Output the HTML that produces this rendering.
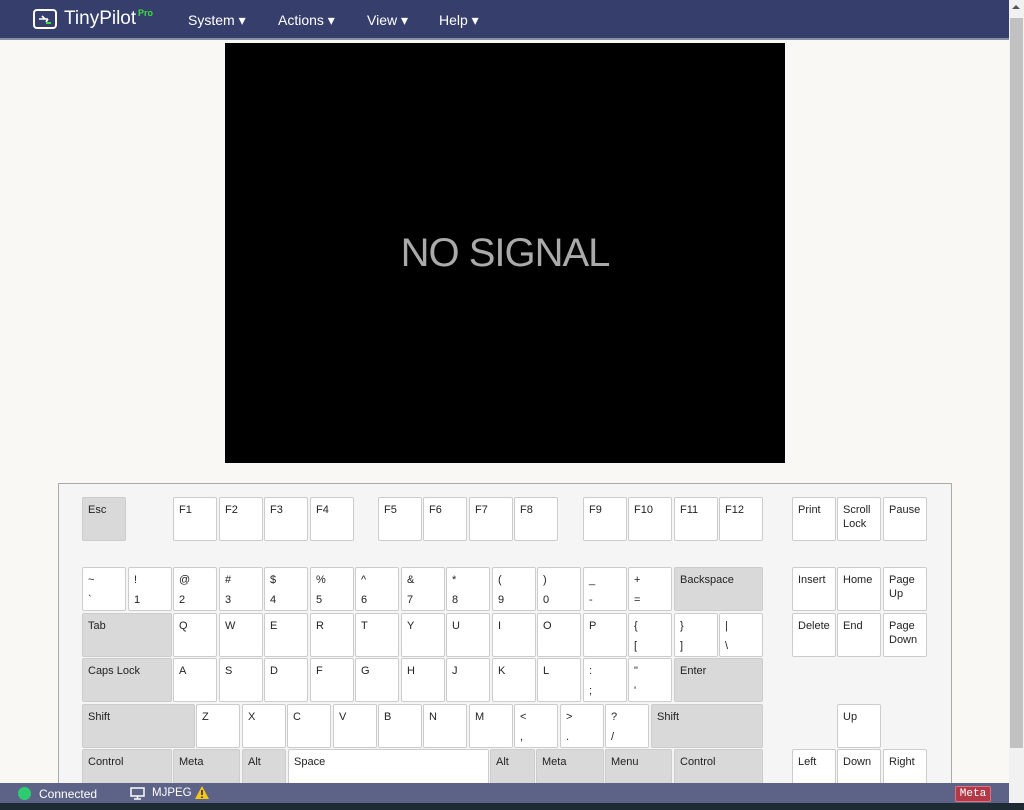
<!DOCTYPE html>
<html><head><meta charset="utf-8"><style>
*{box-sizing:border-box;margin:0;padding:0}
body{width:1024px;height:810px;overflow:hidden;background:#faf8f4;font-family:"Liberation Sans",Arial,sans-serif;position:relative}
.nav{position:absolute;left:0;top:0;width:1009px;height:40px;background:#363f6c;border-bottom:2px solid #8a8fa8}
.nav .logo{position:absolute;left:33px;top:9px;width:24px;height:20px;border:2px solid #fff;border-radius:4px}
.brand{position:absolute;left:64px;top:8px;color:#fff;font-size:19px}
.pro{position:absolute;left:138px;top:8px;color:#3ddc3d;font-size:9px;font-weight:bold}
.menu{position:absolute;top:12px;color:#fff;font-size:14px}
.sb{position:absolute;left:1009px;top:0;width:15px;height:803px;background:#f1f1f1}
.thumb{position:absolute;left:1010px;top:18px;width:13px;height:730px;background:#c1c1c1}
.video{position:absolute;left:225px;top:43px;width:560px;height:420px;background:#000;color:#aaa;font-size:40px;text-align:center;line-height:420px;letter-spacing:-1px}
.kb{position:absolute;left:58px;top:483px;width:894px;height:320px;background:#f5f5f5;border:1px solid #aaa}
.k{position:absolute;height:44px;background:#fff;border:1px solid #ccc;border-radius:2px;font-size:11px;color:#222;padding:5px 0 0 5px;line-height:14px}
.k.g{background:#d9d9d9}
.k i{font-style:normal;display:block;margin-top:6px}
.foot{position:absolute;left:0;top:783px;width:1009px;height:20px;background:#5d6387;color:#fff;font-size:12px}
.task{position:absolute;left:0;top:803px;width:1024px;height:7px;background:#1f2b33}
</style></head><body>
<div class="nav">
 <div class="logo"><svg width="20" height="16" viewBox="0 0 20 16" style="position:absolute;left:0;top:0"><path d="M4 8h9M7 5l3 3M13 8l-2 3" stroke="#fff" stroke-width="1.6" fill="none"/><path d="M11 12h5" stroke="#3ddc3d" stroke-width="2"/></svg></div>
 <div class="brand">TinyPilot</div><div class="pro">Pro</div>
 <div class="menu" style="left:188px">System ▾</div>
 <div class="menu" style="left:278px">Actions ▾</div>
 <div class="menu" style="left:367px">View ▾</div>
 <div class="menu" style="left:439px">Help ▾</div>
</div>
<div class="sb"></div><div class="thumb"></div>
<div style="position:absolute;left:1012px;top:5px;width:0;height:0;border-left:4px solid transparent;border-right:4px solid transparent;border-bottom:4px solid #555"></div>
<div class="video">NO SIGNAL</div>
<div class="kb"></div>
<div class="k g" style="left:82px;top:497px;width:44px">Esc</div>
<div class="k" style="left:173px;top:497px;width:44px">F1</div>
<div class="k" style="left:219px;top:497px;width:44px">F2</div>
<div class="k" style="left:264px;top:497px;width:44px">F3</div>
<div class="k" style="left:310px;top:497px;width:44px">F4</div>
<div class="k" style="left:378px;top:497px;width:44px">F5</div>
<div class="k" style="left:423px;top:497px;width:44px">F6</div>
<div class="k" style="left:469px;top:497px;width:44px">F7</div>
<div class="k" style="left:514px;top:497px;width:44px">F8</div>
<div class="k" style="left:583px;top:497px;width:44px">F9</div>
<div class="k" style="left:628px;top:497px;width:44px">F10</div>
<div class="k" style="left:674px;top:497px;width:44px">F11</div>
<div class="k" style="left:719px;top:497px;width:44px">F12</div>
<div class="k" style="left:792px;top:497px;width:44px">Print</div>
<div class="k" style="left:837px;top:497px;width:44px">Scroll<br>Lock</div>
<div class="k" style="left:883px;top:497px;width:44px">Pause</div>

<div class="k" style="left:82px;top:567px;width:44px">~<i>`</i></div>
<div class="k" style="left:128px;top:567px;width:44px">!<i>1</i></div>
<div class="k" style="left:173px;top:567px;width:44px">@<i>2</i></div>
<div class="k" style="left:219px;top:567px;width:44px">#<i>3</i></div>
<div class="k" style="left:264px;top:567px;width:44px">$<i>4</i></div>
<div class="k" style="left:310px;top:567px;width:44px">%<i>5</i></div>
<div class="k" style="left:355px;top:567px;width:44px">^<i>6</i></div>
<div class="k" style="left:401px;top:567px;width:44px">&amp;<i>7</i></div>
<div class="k" style="left:446px;top:567px;width:44px">*<i>8</i></div>
<div class="k" style="left:492px;top:567px;width:44px">(<i>9</i></div>
<div class="k" style="left:537px;top:567px;width:44px">)<i>0</i></div>
<div class="k" style="left:583px;top:567px;width:44px">_<i>-</i></div>
<div class="k" style="left:628px;top:567px;width:44px">+<i>=</i></div>
<div class="k g" style="left:674px;top:567px;width:89px">Backspace</div>
<div class="k" style="left:792px;top:567px;width:44px">Insert</div>
<div class="k" style="left:837px;top:567px;width:44px">Home</div>
<div class="k" style="left:883px;top:567px;width:44px">Page<br>Up</div>

<div class="k g" style="left:82px;top:613px;width:90px">Tab</div>
<div class="k" style="left:173px;top:613px;width:44px">Q</div>
<div class="k" style="left:219px;top:613px;width:44px">W</div>
<div class="k" style="left:264px;top:613px;width:44px">E</div>
<div class="k" style="left:310px;top:613px;width:44px">R</div>
<div class="k" style="left:355px;top:613px;width:44px">T</div>
<div class="k" style="left:401px;top:613px;width:44px">Y</div>
<div class="k" style="left:446px;top:613px;width:44px">U</div>
<div class="k" style="left:492px;top:613px;width:44px">I</div>
<div class="k" style="left:537px;top:613px;width:44px">O</div>
<div class="k" style="left:583px;top:613px;width:44px">P</div>
<div class="k" style="left:628px;top:613px;width:44px">{<i>[</i></div>
<div class="k" style="left:674px;top:613px;width:44px">}<i>]</i></div>
<div class="k" style="left:719px;top:613px;width:44px">|<i>\</i></div>
<div class="k" style="left:792px;top:613px;width:44px">Delete</div>
<div class="k" style="left:837px;top:613px;width:44px">End</div>
<div class="k" style="left:883px;top:613px;width:44px">Page<br>Down</div>

<div class="k g" style="left:82px;top:658px;width:90px">Caps Lock</div>
<div class="k" style="left:173px;top:658px;width:44px">A</div>
<div class="k" style="left:219px;top:658px;width:44px">S</div>
<div class="k" style="left:264px;top:658px;width:44px">D</div>
<div class="k" style="left:310px;top:658px;width:44px">F</div>
<div class="k" style="left:355px;top:658px;width:44px">G</div>
<div class="k" style="left:401px;top:658px;width:44px">H</div>
<div class="k" style="left:446px;top:658px;width:44px">J</div>
<div class="k" style="left:492px;top:658px;width:44px">K</div>
<div class="k" style="left:537px;top:658px;width:44px">L</div>
<div class="k" style="left:583px;top:658px;width:44px">:<i>;</i></div>
<div class="k" style="left:628px;top:658px;width:44px">"<i>'</i></div>
<div class="k g" style="left:674px;top:658px;width:89px">Enter</div>

<div class="k g" style="left:82px;top:704px;width:113px">Shift</div>
<div class="k" style="left:196px;top:704px;width:44px">Z</div>
<div class="k" style="left:242px;top:704px;width:44px">X</div>
<div class="k" style="left:287px;top:704px;width:44px">C</div>
<div class="k" style="left:333px;top:704px;width:44px">V</div>
<div class="k" style="left:378px;top:704px;width:44px">B</div>
<div class="k" style="left:423px;top:704px;width:44px">N</div>
<div class="k" style="left:469px;top:704px;width:44px">M</div>
<div class="k" style="left:514px;top:704px;width:44px">&lt;<i>,</i></div>
<div class="k" style="left:560px;top:704px;width:44px">&gt;<i>.</i></div>
<div class="k" style="left:605px;top:704px;width:44px">?<i>/</i></div>
<div class="k g" style="left:651px;top:704px;width:112px">Shift</div>
<div class="k" style="left:837px;top:704px;width:44px">Up</div>

<div class="k g" style="left:82px;top:749px;width:90px">Control</div>
<div class="k g" style="left:173px;top:749px;width:67px">Meta</div>
<div class="k g" style="left:242px;top:749px;width:44px">Alt</div>
<div class="k" style="left:288px;top:749px;width:201px">Space</div>
<div class="k g" style="left:490px;top:749px;width:45px">Alt</div>
<div class="k g" style="left:536px;top:749px;width:68px">Meta</div>
<div class="k g" style="left:605px;top:749px;width:67px">Menu</div>
<div class="k g" style="left:674px;top:749px;width:89px">Control</div>
<div class="k" style="left:792px;top:749px;width:44px">Left</div>
<div class="k" style="left:837px;top:749px;width:44px">Down</div>
<div class="k" style="left:883px;top:749px;width:44px">Right</div>

<div class="foot">
 <div style="position:absolute;left:18px;top:4px;width:13px;height:13px;border-radius:50%;background:#2ecc71"></div>
 <div style="position:absolute;left:39px;top:4px">Connected</div>
 <svg style="position:absolute;left:130px;top:4px" width="15" height="13" viewBox="0 0 15 13"><rect x="1" y="1" width="13" height="8" fill="none" stroke="#fff" stroke-width="1.5"/><path d="M7.5 9v3M4 12h7" stroke="#fff" stroke-width="1.5"/></svg>
 <div style="position:absolute;left:152px;top:4px;font-size:11.5px">MJPEG</div>
 <svg style="position:absolute;left:195px;top:3px" width="14" height="13" viewBox="0 0 14 13"><path d="M7 0L14 13H0Z" fill="#f5c518"/><path d="M7 4v5M7 10.5v1.5" stroke="#222" stroke-width="1.5"/></svg>
 <div style="position:absolute;left:955px;top:3px;width:36px;height:16px;background:#b23a48;border:1px solid #e07080;border-radius:2px;color:#fff;font-family:'Liberation Mono',monospace;font-size:11px;text-align:center;line-height:14px">Meta</div>
</div>
<div class="task"></div>
</body></html>
